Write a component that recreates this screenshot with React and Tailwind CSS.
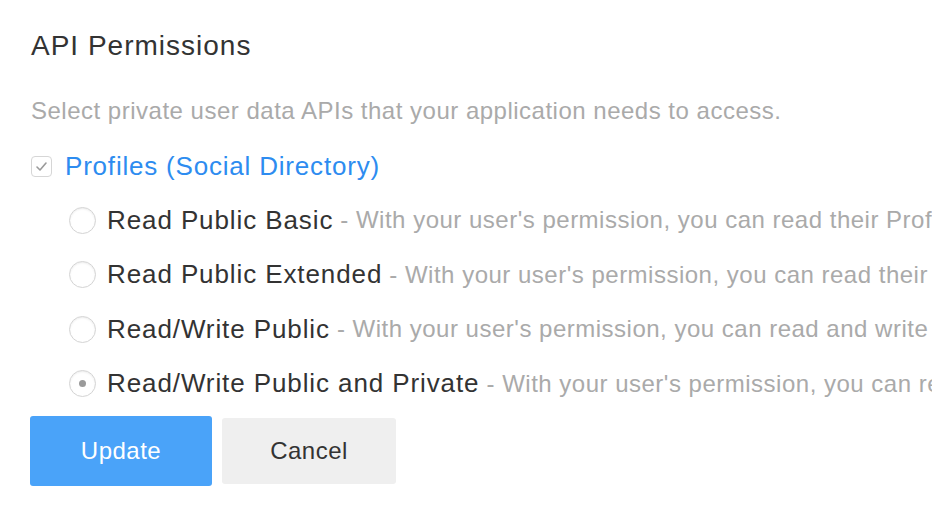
import React, { useState } from 'react';

const opciones = [
  { id: 'basic', label: 'Read Public Basic', desc: "With your user's permission, you can read their Profile basic information" },
  { id: 'extended', label: 'Read Public Extended', desc: "With your user's permission, you can read their Profile extended information" },
  { id: 'rwpublic', label: 'Read/Write Public', desc: "With your user's permission, you can read and write their public Profile" },
  { id: 'rwprivate', label: 'Read/Write Public and Private', desc: "With your user's permission, you can read and write their Profile" },
];

const Radio = ({ checked }) => (
  <span className="w-[27px] h-[27px] shrink-0 rounded-full border border-[#d4d4d4] bg-white shadow-[inset_0_1px_2px_rgba(0,0,0,0.08)] flex items-center justify-center">
    {checked && <span className="w-[7px] h-[7px] rounded-full bg-[#9a9a9a]"></span>}
  </span>
);

const App = () => {
  const [seleccion, setSeleccion] = useState('rwprivate');

  return (
    <div className="w-[932px] h-[524px] overflow-hidden bg-white font-['Liberation_Sans',Arial,sans-serif] pl-[31px] pt-[26px]">
      <h2 className="text-[28px] leading-[40px] tracking-[1px] text-[#333]">API Permissions</h2>

      <p className="mt-[25px] text-[24px] leading-[40px] tracking-[0.5px] text-[#aaa] whitespace-nowrap">
        Select private user data APIs that your application needs to access.
      </p>

      <div className="mt-[13px] flex items-center h-[45px]">
        <span className="w-[21px] h-[21px] rounded-[4px] border border-[#d6d6d6] bg-white flex items-center justify-center">
          <svg width="13" height="13" viewBox="0 0 13 13" fill="none">
            <path d="M2 7l3 3 6-7" stroke="#9a9a9a" strokeWidth="1.6" strokeLinecap="round" strokeLinejoin="round" />
          </svg>
        </span>
        <span className="ml-[13px] text-[26px] tracking-[0.8px] text-[#2d8cf0]">Profiles (Social Directory)</span>
      </div>

      <div className="ml-[38px] mt-[4px] flex flex-col">
        {opciones.map((o) => (
          <label key={o.id} className="flex items-center h-[54.5px] whitespace-nowrap cursor-pointer" onClick={() => setSeleccion(o.id)}>
            <Radio checked={seleccion === o.id} />
            <span className="ml-[11px] text-[26px] tracking-[0.9px] text-[#333]">{o.label}</span>
            <span className="ml-[7px] text-[24px] tracking-[0.5px] text-[#aaa]">- {o.desc}</span>
          </label>
        ))}
      </div>

      <div className="flex items-center gap-[10px] -ml-[1px] mt-[5px]">
        <button className="w-[182px] h-[70px] rounded-[3px] bg-[#4aa3f9] text-white text-[24px] tracking-[0.5px]">Update</button>
        <button className="w-[174px] h-[66px] rounded-[3px] bg-[#efefef] text-[#333] text-[24px] tracking-[0.5px]">Cancel</button>
      </div>
    </div>
  );
};

export default App;
